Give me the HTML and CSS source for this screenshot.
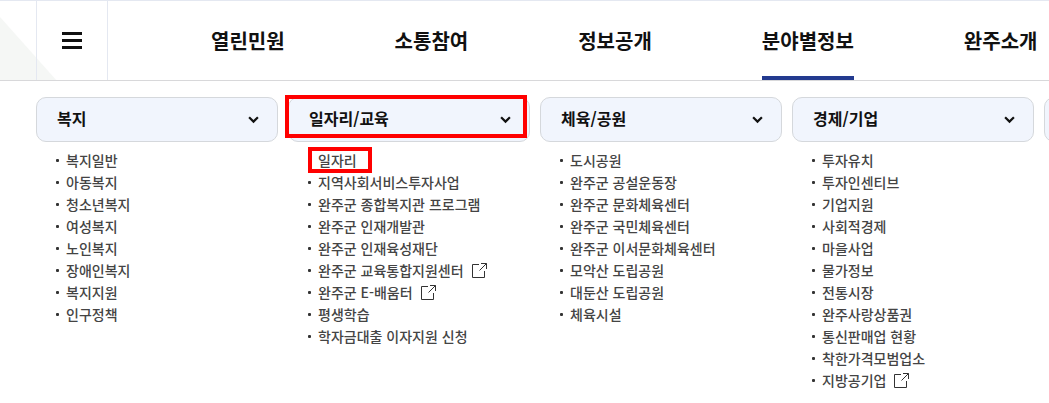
FILE: index.html
```html
<!DOCTYPE html>
<html lang="ko">
<head>
<meta charset="utf-8">
<title>완주군 분야별정보</title>
<link rel="stylesheet" href="styles.css">
</head>
<body>
<svg class="defs" aria-hidden="true">
  <symbol id="chevron" viewBox="0 0 10 7"><path d="M1 1l4 4 4-4" fill="none" stroke="#111" stroke-width="2"/></symbol>
  <symbol id="external" viewBox="0 0 15 15"><path d="M7 1.500H.5v13h12V8M9 .5h5.500v5.500M14.500 .5L7.500 7.500" fill="none" stroke="#333"/></symbol>
</svg>
<header class="header">
  <svg class="corner" viewBox="0 0 57 64" aria-hidden="true"><path d="M0 0l57 64H0z" fill="#f5f7f5"/></svg>
  <button class="menu" type="button" aria-label="전체메뉴"><svg class="menu-icon" viewBox="0 0 20 17" aria-hidden="true"><path d="M0 0h20v3H0zM0 7h20v3H0zM0 14h20v3H0z" fill="#111"/></svg></button>
  <nav class="nav">
    <a class="nav-link" href="#">열린민원</a>
    <a class="nav-link" href="#">소통참여</a>
    <a class="nav-link" href="#">정보공개</a>
    <a class="nav-link current" href="#">분야별정보</a>
    <a class="nav-link" href="#">완주소개</a>
  </nav>
</header>
<main class="panel">
  <section class="column">
    <button class="group" type="button"><span class="group-name">복지</span><svg class="chevron" aria-hidden="true"><use href="#chevron"/></svg></button>
    <ul class="list">
      <li class="item"><a class="link" href="#">복지일반</a></li>
      <li class="item"><a class="link" href="#">아동복지</a></li>
      <li class="item"><a class="link" href="#">청소년복지</a></li>
      <li class="item"><a class="link" href="#">여성복지</a></li>
      <li class="item"><a class="link" href="#">노인복지</a></li>
      <li class="item"><a class="link" href="#">장애인복지</a></li>
      <li class="item"><a class="link" href="#">복지지원</a></li>
      <li class="item"><a class="link" href="#">인구정책</a></li>
    </ul>
  </section>
  <section class="column marked-column">
    <button class="group" type="button"><span class="group-name">일자리/교육</span><svg class="chevron" aria-hidden="true"><use href="#chevron"/></svg></button>
    <ul class="list">
      <li class="item marked-item"><a class="link" href="#">일자리</a></li>
      <li class="item"><a class="link" href="#">지역사회서비스투자사업</a></li>
      <li class="item"><a class="link" href="#">완주군 종합복지관 프로그램</a></li>
      <li class="item"><a class="link" href="#">완주군 인재개발관</a></li>
      <li class="item"><a class="link" href="#">완주군 인재육성재단</a></li>
      <li class="item"><a class="link" href="#">완주군 교육통합지원센터<svg class="external" aria-hidden="true"><use href="#external"/></svg></a></li>
      <li class="item"><a class="link" href="#">완주군 E-배움터<svg class="external" aria-hidden="true"><use href="#external"/></svg></a></li>
      <li class="item"><a class="link" href="#">평생학습</a></li>
      <li class="item"><a class="link" href="#">학자금대출 이자지원 신청</a></li>
    </ul>
  </section>
  <section class="column">
    <button class="group" type="button"><span class="group-name">체육/공원</span><svg class="chevron" aria-hidden="true"><use href="#chevron"/></svg></button>
    <ul class="list">
      <li class="item"><a class="link" href="#">도시공원</a></li>
      <li class="item"><a class="link" href="#">완주군 공설운동장</a></li>
      <li class="item"><a class="link" href="#">완주군 문화체육센터</a></li>
      <li class="item"><a class="link" href="#">완주군 국민체육센터</a></li>
      <li class="item"><a class="link" href="#">완주군 이서문화체육센터</a></li>
      <li class="item"><a class="link" href="#">모악산 도립공원</a></li>
      <li class="item"><a class="link" href="#">대둔산 도립공원</a></li>
      <li class="item"><a class="link" href="#">체육시설</a></li>
    </ul>
  </section>
  <section class="column">
    <button class="group" type="button"><span class="group-name">경제/기업</span><svg class="chevron" aria-hidden="true"><use href="#chevron"/></svg></button>
    <ul class="list">
      <li class="item"><a class="link" href="#">투자유치</a></li>
      <li class="item"><a class="link" href="#">투자인센티브</a></li>
      <li class="item"><a class="link" href="#">기업지원</a></li>
      <li class="item"><a class="link" href="#">사회적경제</a></li>
      <li class="item"><a class="link" href="#">마을사업</a></li>
      <li class="item"><a class="link" href="#">물가정보</a></li>
      <li class="item"><a class="link" href="#">전통시장</a></li>
      <li class="item"><a class="link" href="#">완주사랑상품권</a></li>
      <li class="item"><a class="link" href="#">통신판매업 현황</a></li>
      <li class="item"><a class="link" href="#">착한가격모범업소</a></li>
      <li class="item"><a class="link" href="#">지방공기업<svg class="external" aria-hidden="true"><use href="#external"/></svg></a></li>
    </ul>
  </section>
  <section class="column">
    <button class="group" type="button"></button>
  </section>
</main>
</body>
</html>
```
FILE: styles.css
```css
*,
*::before,
*::after {
  box-sizing: border-box;
}

body {
  margin: 0;
  overflow-x: hidden;
  background: #fff;
  color: #111;
  font-family: "Noto Sans CJK KR", sans-serif;
}

.defs {
  position: absolute;
  width: 0;
  height: 0;
}

.header {
  position: relative;
  display: flex;
  height: 81px;
  padding-left: 36px;
  border-top: 1px solid #e4e8f1;
  border-bottom: 1px solid #d8d8da;
}

/* Decorative wedge behind the menu button */
.corner {
  position: absolute;
  left: 0;
  bottom: -1px;
  z-index: -1;
  width: 57px;
  height: 64px;
}

.menu {
  display: flex;
  flex: none;
  align-items: center;
  justify-content: center;
  width: 72px;
  padding: 0;
  border: solid #e4e8f1;
  border-width: 0 1px;
  background: none;
}

.menu-icon {
  width: 20px;
  height: 17px;
}

.nav {
  display: flex;
  gap: 110px;
  padding-left: 103px;
}

.nav-link {
  display: flex;
  flex: none;
  align-items: center;
  border: solid transparent;
  border-width: 4px 0;
  color: #111;
  font-size: 20px;
  font-weight: 700;
  line-height: 30px;
  text-decoration: none;
  white-space: nowrap;
}

.current {
  border-bottom-color: #233a8f;
}

.panel {
  display: grid;
  grid-template-columns: repeat(5, minmax(242px, 1fr));
  gap: 10px;
  padding: 16px 0 10px 36px;
  overflow: hidden;
}

.column {
  position: relative;
}

.group {
  display: flex;
  align-items: center;
  justify-content: space-between;
  width: 100%;
  height: 45px;
  padding: 0 18px 0 20px;
  border: 1px solid #d5d8dc;
  border-radius: 10px;
  background: #f1f5fd;
  color: #111;
  font: 700 16px/24px "Noto Sans CJK KR", sans-serif;
}

.group-name {
  padding-bottom: 3px;
}

.chevron {
  width: 11px;
  height: 8px;
}

.list {
  margin: 0;
  padding: 7px 0 0 20px;
  list-style: none;
}

.item {
  position: relative;
  display: flex;
  align-items: center;
  gap: 7px;
  height: 22px;
}

.item::before {
  width: 3px;
  height: 3px;
  border-radius: 1px;
  background: #333;
  content: "";
}

.link {
  display: flex;
  align-items: center;
  gap: 8px;
  color: #444;
  font-size: 14px;
  font-weight: 500;
  line-height: 22px;
  text-decoration: none;
  white-space: nowrap;
}

.external {
  width: 15px;
  height: 15px;
}

/* Red highlight frames */
.marked-column::after,
.marked-item::after {
  position: absolute;
  border: 4px solid #f00;
  content: "";
  pointer-events: none;
}

.marked-column::after {
  top: -2px;
  left: -3px;
  width: 100%;
  height: 43px;
}

.marked-item::before {
  visibility: hidden;
}

.marked-item::after {
  top: -2px;
  left: 0;
  width: 64px;
  height: 26px;
}
```
